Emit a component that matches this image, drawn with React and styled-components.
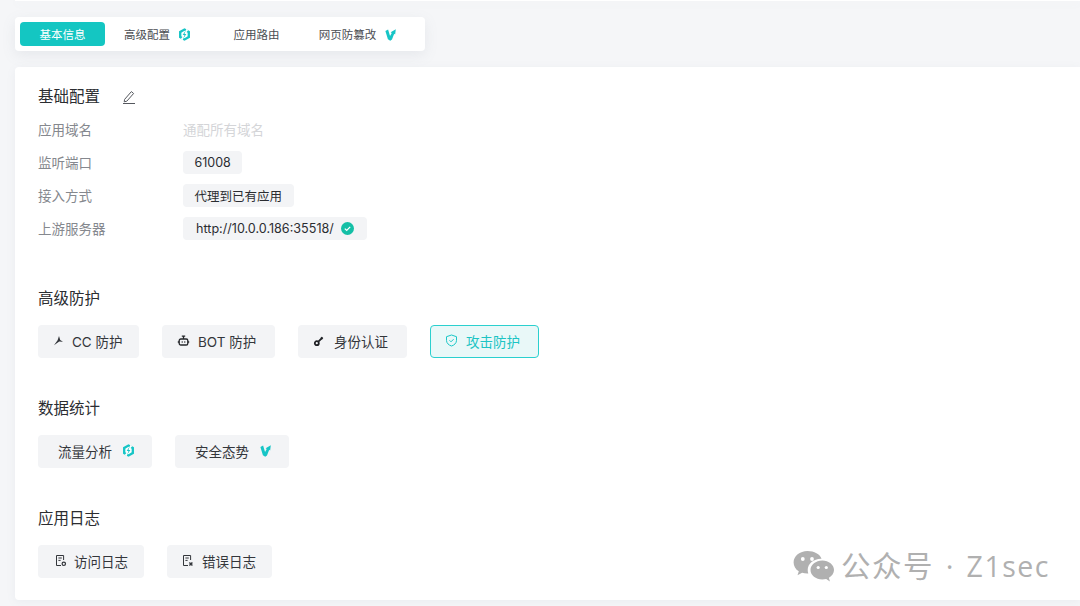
import styled, { createGlobalStyle } from "styled-components";

const GlobalStyle = createGlobalStyle`
  html, body {
    margin: 0;
    padding: 0;
    height: 606px;
    overflow: hidden;
    background: #f5f6f8;
    font-family: Inter, "Noto Sans CJK SC", sans-serif;
  }
`;

const BadgeA = ({ size = 14 }) => (
  <svg width={size} height={size} viewBox="0 0 14 14">
    <path d="M7 .3 12.9 3.500v7L7 13.700 1.100 10.500v-7z" fill="#17c5c6" />
    <path d="M7 3 10.400 5v4L7 11 3.600 9V5z" fill="#fff" />
    <path d="M9.300 .9 10.800 2.600 7.800 5.600H6.400z M4.700 13.100 3.200 11.400 6.200 8.400H7.600z" fill="#fff" />
    <path d="M8.300 2.800 5 7.500H7L5.700 11.200 9 6.500H7z" fill="#17c5c6" />
  </svg>
);

const BadgeB = ({ size = 14 }) => (
  <svg width={size} height={size} viewBox="0 0 14 14">
    <path d="M1.500 3.200 4.400 1.600 6.500 8.700 8.300 5.400 7.200 4.500 12.700 1.400 12 7 11 6.200 8.600 12.300 6.700 13.700 4.200 12.200z" fill="#17c5c6" />
  </svg>
);

const PencilIcon = () => (
  <svg width="16" height="16" viewBox="0 0 16 16" fill="none" stroke="#55585e" strokeWidth="1">
    <path d="M3.600 10.400 10.400 2.600l2.200 1.900-6.800 7.700-2.600.6z" strokeLinejoin="round" />
    <path d="M2 14.500h12" />
  </svg>
);

const CheckBadge = () => (
  <svg width="13" height="13" viewBox="0 0 13 13">
    <circle cx="6.500" cy="6.500" r="6.500" fill="#14bfa6" />
    <path d="M3.800 6.600 5.700 8.400 9.200 4.900" fill="none" stroke="#fff" strokeWidth="1.300" />
  </svg>
);

const PinIcon = () => (
  <svg width="11" height="11" viewBox="0 0 11 11" fill="#33363b">
    <path d="M6 1 7.200 5 10 6.800 6.200 6.600 1 10.200 4.600 5.200z" />
  </svg>
);

const RobotIcon = () => (
  <svg width="13" height="13" viewBox="0 0 13 13" fill="none" stroke="#25272b" strokeWidth="1.300">
    <rect x="2.200" y="5" width="8.600" height="6" rx="1.600" />
    <path d="M6.500 5V2.600M4.800 2.200h3.400M.8 8h1.400M10.800 8h1.400" />
    <path d="M4.700 8h1M7.300 8h1" />
  </svg>
);

const KeyIcon = () => (
  <svg width="12" height="12" viewBox="0 0 12 12" fill="none" stroke="#1f2125" strokeWidth="1.800">
    <circle cx="3.800" cy="8.200" r="2" />
    <path d="M5.400 6.600 9.600 2.400M8 2.400l1.600 1.600" />
  </svg>
);

const ShieldIcon = () => (
  <svg width="13" height="13" viewBox="0 0 13 13" fill="none" stroke="#19c7c7" strokeWidth="1">
    <path d="M6.500 1 11.500 2.700V6.400C11.500 9.200 9.200 11.200 6.500 12 3.800 11.200 1.500 9.200 1.500 6.400V2.700z" strokeLinejoin="round" />
    <path d="M4.500 6.300 6 7.800 8.600 5.200" />
  </svg>
);

const LogIcon = ({ cross }) => (
  <svg width="12" height="13" viewBox="0 0 12 13" fill="none" stroke="#33363b" strokeWidth="1">
    <path d="M8.600 6V1.500H1.500v10H6" />
    <path d="M3.400 4h3.400M3.400 6.400h2.200" />
    {cross ? (
      <path d="M7.400 8.600 10.400 11.600M10.400 8.600 7.400 11.600" strokeWidth="1.400" />
    ) : (
      <circle cx="8.800" cy="9.800" r="1.700" strokeWidth="1.200" />
    )}
  </svg>
);

const WechatIcon = () => (
  <svg width="41" height="34" viewBox="0 0 41 34" fill="#b0b0b0">
    <path d="M14.500 1C6.800 1 .6 6.100.6 12.400c0 3.600 2 6.800 5.200 8.900L4.500 25.200l4.600-2.400c1.600.5 3.400.7 5.200.7h1c-.4-1.100-.6-2.300-.6-3.500 0-6.200 5.900-11.200 13.200-11.200h.6C27 4.100 21.300 1 14.500 1z" />
    <path d="M41 20c0-5.200-5.200-9.500-11.700-9.500S17.500 14.800 17.500 20s5.300 9.500 11.800 9.500c1.400 0 2.700-.2 3.900-.5l3.700 2.500-1-3.700C38.900 26.100 41 23.200 41 20z" />
    <g fill="#fff">
      <circle cx="9.800" cy="9" r="1.900" />
      <circle cx="19" cy="9" r="1.900" />
      <circle cx="25.200" cy="17.500" r="1.600" />
      <circle cx="33.300" cy="17.500" r="1.600" />
    </g>
  </svg>
);

const App = () => {
  return (
    <>
      <GlobalStyle />
      <Page>
        <TopSliver />
        <TabBar>
          <Tab $active $width={85}>基本信息</Tab>
          <Tab $width={105} $gap={8}>高级配置<BadgeA size={13} /></Tab>
          <Tab $width={93}>应用路由</Tab>
          <Tab $width={110} $gap={8}>网页防篡改<BadgeB size={13} /></Tab>
        </TabBar>
        <Card>
          <Section>
            <HeadingRow>
              <Heading>基础配置</Heading>
              <PencilIcon />
            </HeadingRow>
            <InfoList>
              <InfoRow>
                <InfoLabel>应用域名</InfoLabel>
                <Placeholder>通配所有域名</Placeholder>
              </InfoRow>
              <InfoRow>
                <InfoLabel>监听端口</InfoLabel>
                <Tag>61008</Tag>
              </InfoRow>
              <InfoRow>
                <InfoLabel>接入方式</InfoLabel>
                <Tag>代理到已有应用</Tag>
              </InfoRow>
              <InfoRow>
                <InfoLabel>上游服务器</InfoLabel>
                <Tag $gap={7} $wide>http://10.0.0.186:35518/<CheckBadge /></Tag>
              </InfoRow>
            </InfoList>
          </Section>
          <Section $top={43}>
            <Heading>高级防护</Heading>
            <ButtonRow>
              <ActionButton $width={101} $pad={14} $gap={8}><PinIcon />CC 防护</ActionButton>
              <ActionButton $width={113} $pad={14} $gap={8}><RobotIcon />BOT 防护</ActionButton>
              <ActionButton $width={109} $pad={14} $gap={9}><KeyIcon />身份认证</ActionButton>
              <ActionButton $width={109} $pad={14} $gap={8} $active><ShieldIcon />攻击防护</ActionButton>
            </ButtonRow>
          </Section>
          <Section $top={40}>
            <Heading>数据统计</Heading>
            <ButtonRow>
              <ActionButton $width={114} $pad={19} $gap={10}>流量分析<BadgeA size={13} /></ActionButton>
              <ActionButton $width={114} $pad={19} $gap={10}>安全态势<BadgeB size={13} /></ActionButton>
            </ButtonRow>
          </Section>
          <Section $top={40}>
            <Heading>应用日志</Heading>
            <ButtonRow>
              <ActionButton $width={106} $pad={16} $gap={7}><LogIcon />访问日志</ActionButton>
              <ActionButton $width={105} $pad={14} $gap={8}><LogIcon cross />错误日志</ActionButton>
            </ButtonRow>
          </Section>
          <Watermark>
            <WechatIcon />
            <WatermarkText>公众号 · <WatermarkLatin>Z1sec</WatermarkLatin></WatermarkText>
          </Watermark>
        </Card>
      </Page>
    </>
  );
};

const Page = styled.div`
  width: 1080px;
  height: 606px;
  overflow: hidden;
`;

const TopSliver = styled.div`
  height: 1px;
  margin: 0 0 16px 15px;
  background: #fff;
  box-shadow: 0 2px 8px rgba(120, 130, 150, 0.12);
`;

const TabBar = styled.div`
  display: flex;
  box-sizing: border-box;
  width: 410px;
  height: 34px;
  margin-left: 15px;
  padding: 5px;
  background: #fff;
  border-radius: 4px;
  box-shadow: 0 4px 14px rgba(120, 130, 150, 0.12);
`;

const Tab = styled.div`
  display: flex;
  flex: none;
  align-items: center;
  justify-content: center;
  gap: ${(p) => p.$gap || 0}px;
  width: ${(p) => p.$width}px;
  border-radius: 4px;
  font-size: 11.500px;
  color: ${(p) => (p.$active ? "#fff" : "#4a4d52")};
  background: ${(p) => (p.$active ? "#14c6c2" : "transparent")};
`;

const Card = styled.div`
  position: relative;
  box-sizing: border-box;
  height: 533px;
  margin: 16px 0 0 15px;
  padding: 19px 23px 0;
  background: #fff;
  border-radius: 4px 0 0 4px;
  box-shadow: 0 2px 10px rgba(120, 130, 150, 0.08);
`;

const Section = styled.section`
  margin-top: ${(p) => p.$top || 0}px;
`;

const HeadingRow = styled.div`
  display: flex;
  align-items: center;
  gap: 21px;
`;

const Heading = styled.h2`
  margin: 0;
  height: 22px;
  font-size: 15.500px;
  font-weight: 400;
  line-height: 22px;
  color: #2b2d31;
`;

const InfoList = styled.div`
  display: grid;
  grid-auto-rows: 33px;
  margin-top: 5px;
`;

const InfoRow = styled.div`
  display: flex;
  align-items: center;
`;

const InfoLabel = styled.div`
  width: 145px;
  padding-bottom: 2px;
  font-size: 13.500px;
  color: #85888e;
`;

const Placeholder = styled.div`
  padding-bottom: 2px;
  font-size: 13.500px;
  color: #d4d5d8;
`;

const Tag = styled.div`
  display: flex;
  align-items: center;
  gap: ${(p) => p.$gap || 0}px;
  height: 23px;
  padding: 0 ${(p) => (p.$wide ? 13 : 11.5)}px;
  border-radius: 4px;
  background: #f3f4f6;
  font-size: ${(p) => (p.$wide ? 12.6 : 12.5)}px;
  color: #2b2d31;
`;

const ButtonRow = styled.div`
  display: flex;
  gap: 23px;
  margin-top: 15px;
`;

const ActionButton = styled.div`
  display: flex;
  flex: none;
  align-items: center;
  gap: ${(p) => p.$gap || 0}px;
  box-sizing: border-box;
  width: ${(p) => p.$width}px;
  height: 33px;
  padding: 0 0 2px ${(p) => p.$pad}px;
  border-radius: 4px;
  border: 1px solid ${(p) => (p.$active ? "#2bd0cf" : "transparent")};
  background: ${(p) => (p.$active ? "#e9f8f8" : "#f3f4f6")};
  font-size: 13.500px;
  white-space: nowrap;
  color: ${(p) => (p.$active ? "#1cc4c4" : "#33363b")};
`;

const Watermark = styled.div`
  position: absolute;
  top: 476px;
  left: 778px;
  display: flex;
  align-items: center;
  gap: 7px;
`;

const WatermarkText = styled.div`
  padding-bottom: 4px;
  font-family: "Open Sans", "Noto Sans CJK SC", sans-serif;
  font-size: 29.500px;
  letter-spacing: 1.500px;
  word-spacing: 2.500px;
  white-space: nowrap;
  color: #b0b0b0;
`;

const WatermarkLatin = styled.span`
  font-size: 28.500px;
`;

export default App;
